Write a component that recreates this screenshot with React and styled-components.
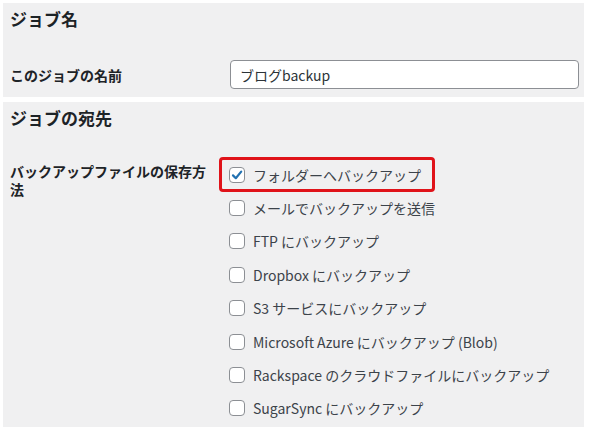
import React from 'react';
import styled, { createGlobalStyle } from 'styled-components';

const GlobalStyle = createGlobalStyle`
  html, body {
    margin: 0;
    padding: 0;
    background: #ffffff;
  }
  body {
    font-family: "Noto Sans CJK JP", "Noto Sans", sans-serif;
    color: #1d2327;
  }
`;

const destinations = [
  { label: 'フォルダーへバックアップ', checked: true },
  { label: 'メールでバックアップを送信' },
  { label: 'FTP にバックアップ' },
  { label: 'Dropbox にバックアップ' },
  { label: 'S3 サービスにバックアップ' },
  { label: 'Microsoft Azure にバックアップ (Blob)' },
  { label: 'Rackspace のクラウドファイルにバックアップ' },
  { label: 'SugarSync にバックアップ' },
];

function CheckMark() {
  return (
    <svg width="12" height="12" viewBox="0 0 12 12">
      <path d="M2 6.4 L4.8 9.2 L10.2 2.6" fill="none" stroke="#2271b1" strokeWidth="2.2" strokeLinecap="round" strokeLinejoin="round" />
    </svg>
  );
}

function Option({ label, checked }) {
  return (
    <OptionRow>
      <OptionLabel $highlight={checked}>
        <Box>{checked ? <CheckMark /> : null}</Box>
        <span>{label}</span>
      </OptionLabel>
    </OptionRow>
  );
}

export default function App() {
  return (
    <Page>
      <GlobalStyle />
      <Panel>
        <Heading>ジョブ名</Heading>
        <NameRow>
          <FieldLabel>このジョブの名前</FieldLabel>
          <TextInput>ブログbackup</TextInput>
        </NameRow>
      </Panel>
      <Panel $last>
        <Heading>ジョブの宛先</Heading>
        <DestRow>
          <FieldLabel $top>バックアップファイルの保存方法</FieldLabel>
          <OptionList>
            {destinations.map((d) => (
              <Option key={d.label} label={d.label} checked={d.checked} />
            ))}
          </OptionList>
        </DestRow>
      </Panel>
    </Page>
  );
}

const Page = styled.div`
  width: 590px;
  height: 432px;
  padding: 3px 0 0 3px;
  box-sizing: border-box;
  display: flex;
  flex-direction: column;
  gap: 5px;
`;

const Panel = styled.section`
  width: 581px;
  box-sizing: border-box;
  background: #f0f0f1;
  padding: 0 5px ${(p) => (p.$last ? '2px' : '8px')} 7px;
`;

const Heading = styled.h2`
  margin: 0;
  height: 32px;
  line-height: 32px;
  font-size: 17px;
  font-weight: 700;
  color: #1d2327;
`;

const NameRow = styled.div`
  display: grid;
  grid-template-columns: 220px 1fr;
  align-items: center;
  padding-top: 25px;
`;

const DestRow = styled.div`
  display: grid;
  grid-template-columns: 205px 1fr;
  column-gap: 14px;
  align-items: start;
  padding-top: 24px;
`;

const FieldLabel = styled.div`
  font-size: 14px;
  font-weight: 700;
  line-height: 18px;
  color: #1d2327;
  margin-top: ${(p) => (p.$top ? '4px' : '0')};
`;

const TextInput = styled.div`
  height: 29px;
  box-sizing: border-box;
  border: 1px solid #8c8f94;
  border-radius: 4px;
  background: #ffffff;
  padding: 0 9px;
  display: flex;
  align-items: center;
  font-size: 14px;
  color: #2c3338;
`;

const OptionList = styled.div`
  display: flex;
  flex-direction: column;
`;

const OptionRow = styled.div`
  height: 33.4px;
  display: flex;
  align-items: center;
`;

const OptionLabel = styled.label`
  position: relative;
  display: inline-flex;
  align-items: center;
  gap: 8px;
  font-size: 14px;
  color: #3c434a;
  &::before {
    content: '';
    display: ${(p) => (p.$highlight ? 'block' : 'none')};
    position: absolute;
    left: -10px;
    right: -14px;
    top: -8px;
    bottom: -7px;
    border: 3px solid #e0131a;
    border-radius: 4px;
  }
`;

const Box = styled.span`
  width: 16px;
  height: 16px;
  box-sizing: border-box;
  border: 1px solid #8c8f94;
  border-radius: 4px;
  background: #ffffff;
  display: inline-flex;
  align-items: center;
  justify-content: center;
  flex-shrink: 0;
`;
